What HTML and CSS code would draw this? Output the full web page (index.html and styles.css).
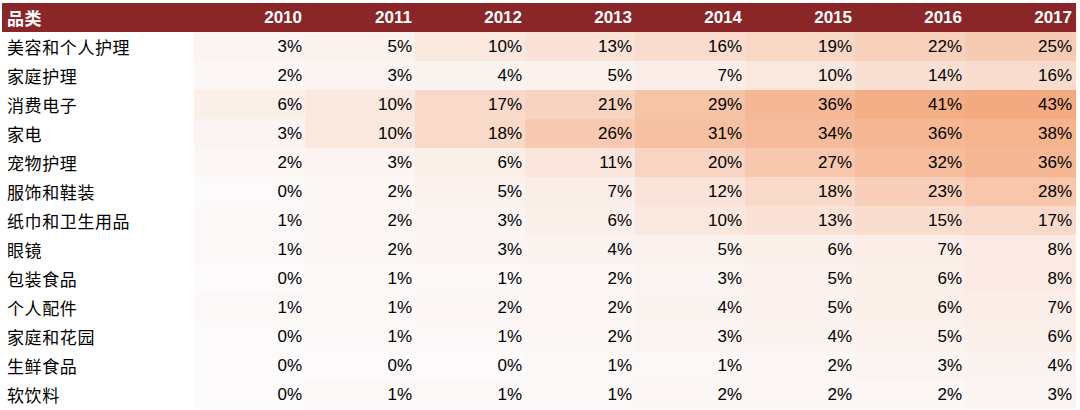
FILE: index.html
```html
<!DOCTYPE html>
<html lang="zh-CN">
<head>
<meta charset="utf-8">
<link rel="stylesheet" href="styles.css">
</head>
<body>
<table class="heat">
<colgroup>
<col class="c-label"><col class="c-wide"><col class="c-n"><col class="c-n"><col class="c-n"><col class="c-n"><col class="c-n"><col class="c-n"><col class="c-wide">
</colgroup>
<thead>
<tr class="head"><th class="label">品类</th><th>2010</th><th>2011</th><th>2012</th><th>2013</th><th>2014</th><th>2015</th><th>2016</th><th>2017</th></tr>
</thead>
<tbody id="body"></tbody>
</table>
<script src="script.js"></script>
</body>
</html>
```

FILE: styles.css
```css
html, body {
  margin: 0;
  padding: 0;
  background: #ffffff;
}
body {
  padding: 3px 0 0 2px;
  font-family: "Liberation Sans", Arial, "Noto Sans CJK SC", sans-serif;
  font-size: 17px;
  color: #000000;
}
.heat {
  border-collapse: collapse;
  table-layout: fixed;
  width: 1074px;
}
.c-label { width: 192px; }
.c-wide { width: 111px; }
.c-n { width: 110px; }
.heat th, .heat td {
  padding: 0 3px 0 0;
  text-align: right;
  white-space: nowrap;
  line-height: 20px;
}
.head th {
  background: #8a2627;
  color: #ffffff;
  font-weight: bold;
  height: 28px;
  padding-top: 1px;
}
.head th.label, .heat td.label {
  text-align: left;
  padding-left: 5px;
  font-family: "Noto Sans CJK SC", "Liberation Sans", sans-serif;
  letter-spacing: 0.6px;
}
.heat th:last-child, .heat td:last-child {
  padding-right: 4px;
}
.heat td {
  height: 29px;
}
.heat td.label {
  background: #ffffff;
  font-size: 17px;
}
```

FILE: script.js
```js
const rows = [
  ["美容和个人护理", [3,5,10,13,16,19,22,25]],
  ["家庭护理", [2,3,4,5,7,10,14,16]],
  ["消费电子", [6,10,17,21,29,36,41,43]],
  ["家电", [3,10,18,26,31,34,36,38]],
  ["宠物护理", [2,3,6,11,20,27,32,36]],
  ["服饰和鞋装", [0,2,5,7,12,18,23,28]],
  ["纸巾和卫生用品", [1,2,3,6,10,13,15,17]],
  ["眼镜", [1,2,3,4,5,6,7,8]],
  ["包装食品", [0,1,1,2,3,5,6,8]],
  ["个人配件", [1,1,2,2,4,5,6,7]],
  ["家庭和花园", [0,1,1,2,3,4,5,6]],
  ["生鲜食品", [0,0,0,1,1,2,3,4]],
  ["软饮料", [0,1,1,1,2,2,2,3]]
];
const lo = [252, 250, 251];
const hi = [244, 170, 128];
const max = 43;
function color(v) {
  const f = v / max;
  const c = lo.map((a, i) => Math.round(a + (hi[i] - a) * f));
  return `rgb(${c[0]},${c[1]},${c[2]})`;
}
const body = document.getElementById("body");
for (const [name, vals] of rows) {
  const tr = document.createElement("tr");
  const th = document.createElement("td");
  th.className = "label";
  th.textContent = name;
  tr.appendChild(th);
  for (const v of vals) {
    const td = document.createElement("td");
    td.textContent = v + "%";
    td.style.background = color(v);
    tr.appendChild(td);
  }
  body.appendChild(tr);
}
```
